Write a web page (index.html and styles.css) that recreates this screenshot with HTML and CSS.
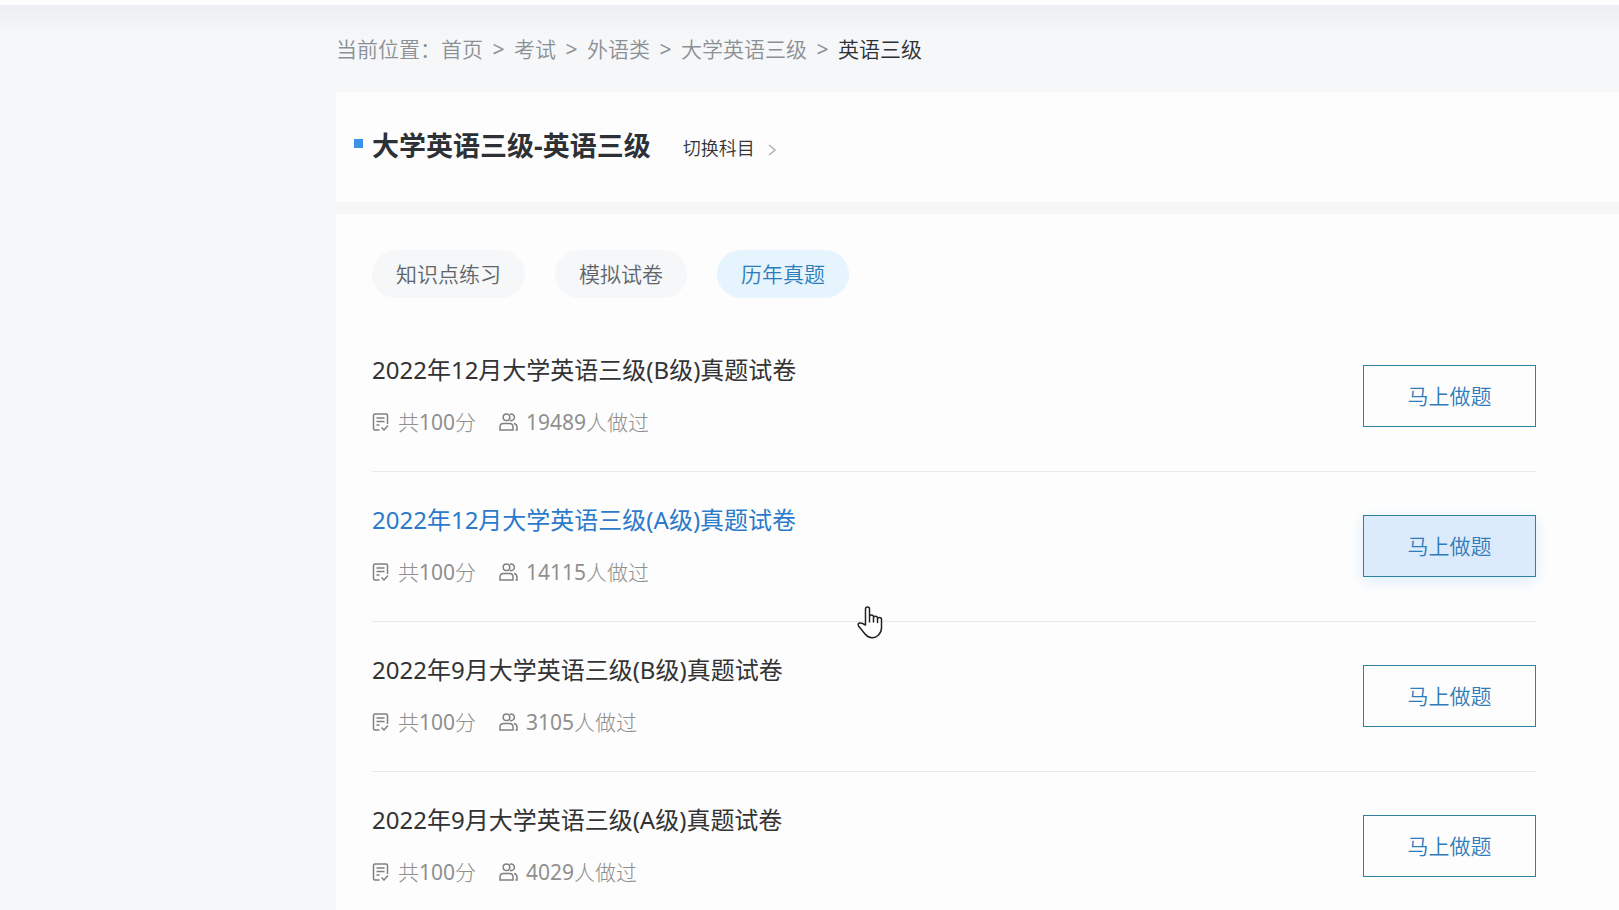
FILE: index.html
```html
<!DOCTYPE html>
<html lang="zh-CN">
<head>
<meta charset="utf-8">
<title>大学英语三级-英语三级</title>
<link rel="stylesheet" href="styles.css">
</head>
<body>
<svg class="sprite" aria-hidden="true">
  <symbol id="icon-paper" viewBox="0 0 16 18">
    <path d="M7 17H2.500Q1 17 1 15.500V2.500Q1 1 2.500 1H13.500Q15 1 15 2.500V11M4 5H12M4 8.500H12M4 12H7M9 14.500L11.500 17L15.500 12.500"/>
  </symbol>
  <symbol id="icon-people" viewBox="0 0 20 18">
    <circle cx="7.500" cy="4.300" r="3.300"/>
    <path d="M11 1.200A3.300 3.300 0 1 1 11 7.400M1 17V14Q1 10.500 4.500 10.500H10.500Q14 10.500 14 14V17ZM15 10.500Q18 11 18 14.500V17H16.500"/>
  </symbol>
</svg>
<header class="topbar"></header>
<main class="page">
  <nav class="crumbs" aria-label="当前位置">
    <span>当前位置：</span><a href="#">首页</a><span class="sep">&gt;</span><a href="#">考试</a><span class="sep">&gt;</span><a href="#">外语类</a><span class="sep">&gt;</span><a href="#">大学英语三级</a><span class="sep">&gt;</span><a href="#" class="current">英语三级</a>
  </nav>
  <section class="card subject">
    <h1>大学英语三级-英语三级</h1>
    <a href="#" class="switch">切换科目
      <svg class="chevron" viewBox="0 0 8 12" aria-hidden="true"><path d="M1 1L7 6L1 11"/></svg>
    </a>
  </section>
  <section class="card papers">
    <div class="tabs">
      <button type="button">知识点练习</button>
      <button type="button">模拟试卷</button>
      <button type="button" class="active">历年真题</button>
    </div>
    <ul class="list">
      <li class="row">
        <div class="info">
          <a href="#" class="title">2022年12月大学英语三级(B级)真题试卷</a>
          <div class="meta"><span><svg class="paper"><use href="#icon-paper"/></svg>共<b>100</b>分</span><span><svg class="people"><use href="#icon-people"/></svg><b>19489</b>人做过</span></div>
        </div>
        <button type="button" class="start">马上做题</button>
      </li>
      <li class="row hovered">
        <div class="info">
          <a href="#" class="title">2022年12月大学英语三级(A级)真题试卷</a>
          <div class="meta"><span><svg class="paper"><use href="#icon-paper"/></svg>共<b>100</b>分</span><span><svg class="people"><use href="#icon-people"/></svg><b>14115</b>人做过</span></div>
        </div>
        <button type="button" class="start">马上做题</button>
      </li>
      <li class="row">
        <div class="info">
          <a href="#" class="title">2022年9月大学英语三级(B级)真题试卷</a>
          <div class="meta"><span><svg class="paper"><use href="#icon-paper"/></svg>共<b>100</b>分</span><span><svg class="people"><use href="#icon-people"/></svg><b>3105</b>人做过</span></div>
        </div>
        <button type="button" class="start">马上做题</button>
      </li>
      <li class="row">
        <div class="info">
          <a href="#" class="title">2022年9月大学英语三级(A级)真题试卷</a>
          <div class="meta"><span><svg class="paper"><use href="#icon-paper"/></svg>共<b>100</b>分</span><span><svg class="people"><use href="#icon-people"/></svg><b>4029</b>人做过</span></div>
        </div>
        <button type="button" class="start">马上做题</button>
      </li>
    </ul>
  </section>
</main>
<svg class="pointer" viewBox="0 0 26 33" aria-hidden="true">
  <path d="M8.500 19V3Q8.500 1 10.500 1Q12.500 1 12.500 3V16V10.500Q12.500 9 14.500 9Q16.500 9 16.500 11V16V12Q16.500 10.200 18.500 10.200Q20.500 10.200 20.500 12V16.500V13Q20.500 11.500 22.500 11.500Q24.500 11.500 24.500 13.500V22Q24.500 26 21.500 29Q18.500 32 15 31.800Q11 31.500 8 28Q4 23 1.500 20Q0.500 17.500 2.500 17Q4.500 16.500 8.500 19Z"/>
</svg>
</body>
</html>
```
FILE: styles.css
```css
* { box-sizing: border-box; }
body {
  margin: 0;
  background: #f5f7f9;
  color: #333;
  font-family: "Noto Sans", "Noto Sans CJK SC", sans-serif;
  font-size: 21px;
  font-weight: 350;
  line-height: 32px;
}
a { color: inherit; text-decoration: none; }
button { font: inherit; cursor: pointer; }
.sprite { display: none; }
.topbar {
  height: 5px;
  background: #fdfdfd;
}
.page {
  padding-left: 336px;
  background: linear-gradient(#eceef2, #f5f7f9 32px);
}
.crumbs {
  display: flex;
  padding: 28px 0 27px;
  color: #8c9094;
}
.sep { width: 31px; text-align: center; font-weight: 400; }
.crumbs .current { color: #2d3033; }
.card { background: #fdfdfd; }
.subject {
  display: flex;
  align-items: center;
  height: 110px;
  padding: 0 18px 2px;
}
h1 {
  display: flex;
  align-items: center;
  gap: 9px;
  margin: 0;
  color: #2d3136;
  font-size: 27px;
  font-weight: 700;
}
h1::before {
  content: "";
  width: 9px;
  height: 9px;
  margin-bottom: 6px;
  background: #3c92ea;
}
.switch {
  display: flex;
  align-items: center;
  gap: 13px;
  margin: 4px 0 0 32px;
  font-size: 18px;
}
.chevron { width: 8px; height: 12px; margin-top: 3px; }
.chevron path { fill: none; stroke: #b4b4b4; stroke-width: 1.5; }
.papers {
  margin-top: 12px;
  padding: 36px 83px 0 36px;
  box-shadow: 0 -12px #f7f7f8;
}
.tabs {
  display: flex;
  gap: 30px;
  margin-bottom: 24px;
}
.tabs button {
  height: 48px;
  padding: 0 24px;
  border: 0;
  border-radius: 24px;
  background: #f5f7f9;
  color: #606468;
}
.tabs .active { background: #e6f4fd; color: #2c7cba; }
.list { margin: 0; padding: 0; list-style: none; }
.row {
  display: flex;
  align-items: center;
  justify-content: space-between;
  height: 150px;
  padding-bottom: 2px;
  border-bottom: 1px solid #e8e8e8;
}
.info {
  display: flex;
  flex-direction: column;
  gap: 20px;
}
.title { font-size: 24px; font-weight: 400; }
.hovered .title { color: #2b7acb; }
.meta { display: flex; gap: 23px; color: #8f8f8f; font-weight: 300; }
.meta span { display: flex; align-items: center; }
.meta b { font-weight: 400; }
.meta svg { fill: none; stroke: #808080; stroke-width: 1.5; }
.paper { width: 17px; height: 18px; margin-right: 9px; }
.people { width: 20px; height: 18px; margin-right: 7px; }
.start {
  width: 173px;
  height: 62px;
  border: 1px solid #2f819f;
  background: #fdfdfd;
  color: #2f7cba;
}
.hovered .start {
  background: #dcebfb;
  box-shadow: 0 4px 14px #d9edfb;
}
.pointer {
  position: absolute;
  top: 606px;
  left: 857px;
  width: 26px;
  height: 33px;
}
.pointer path { fill: #fff; stroke: #222; stroke-width: 1.5; stroke-linejoin: round; }
```
